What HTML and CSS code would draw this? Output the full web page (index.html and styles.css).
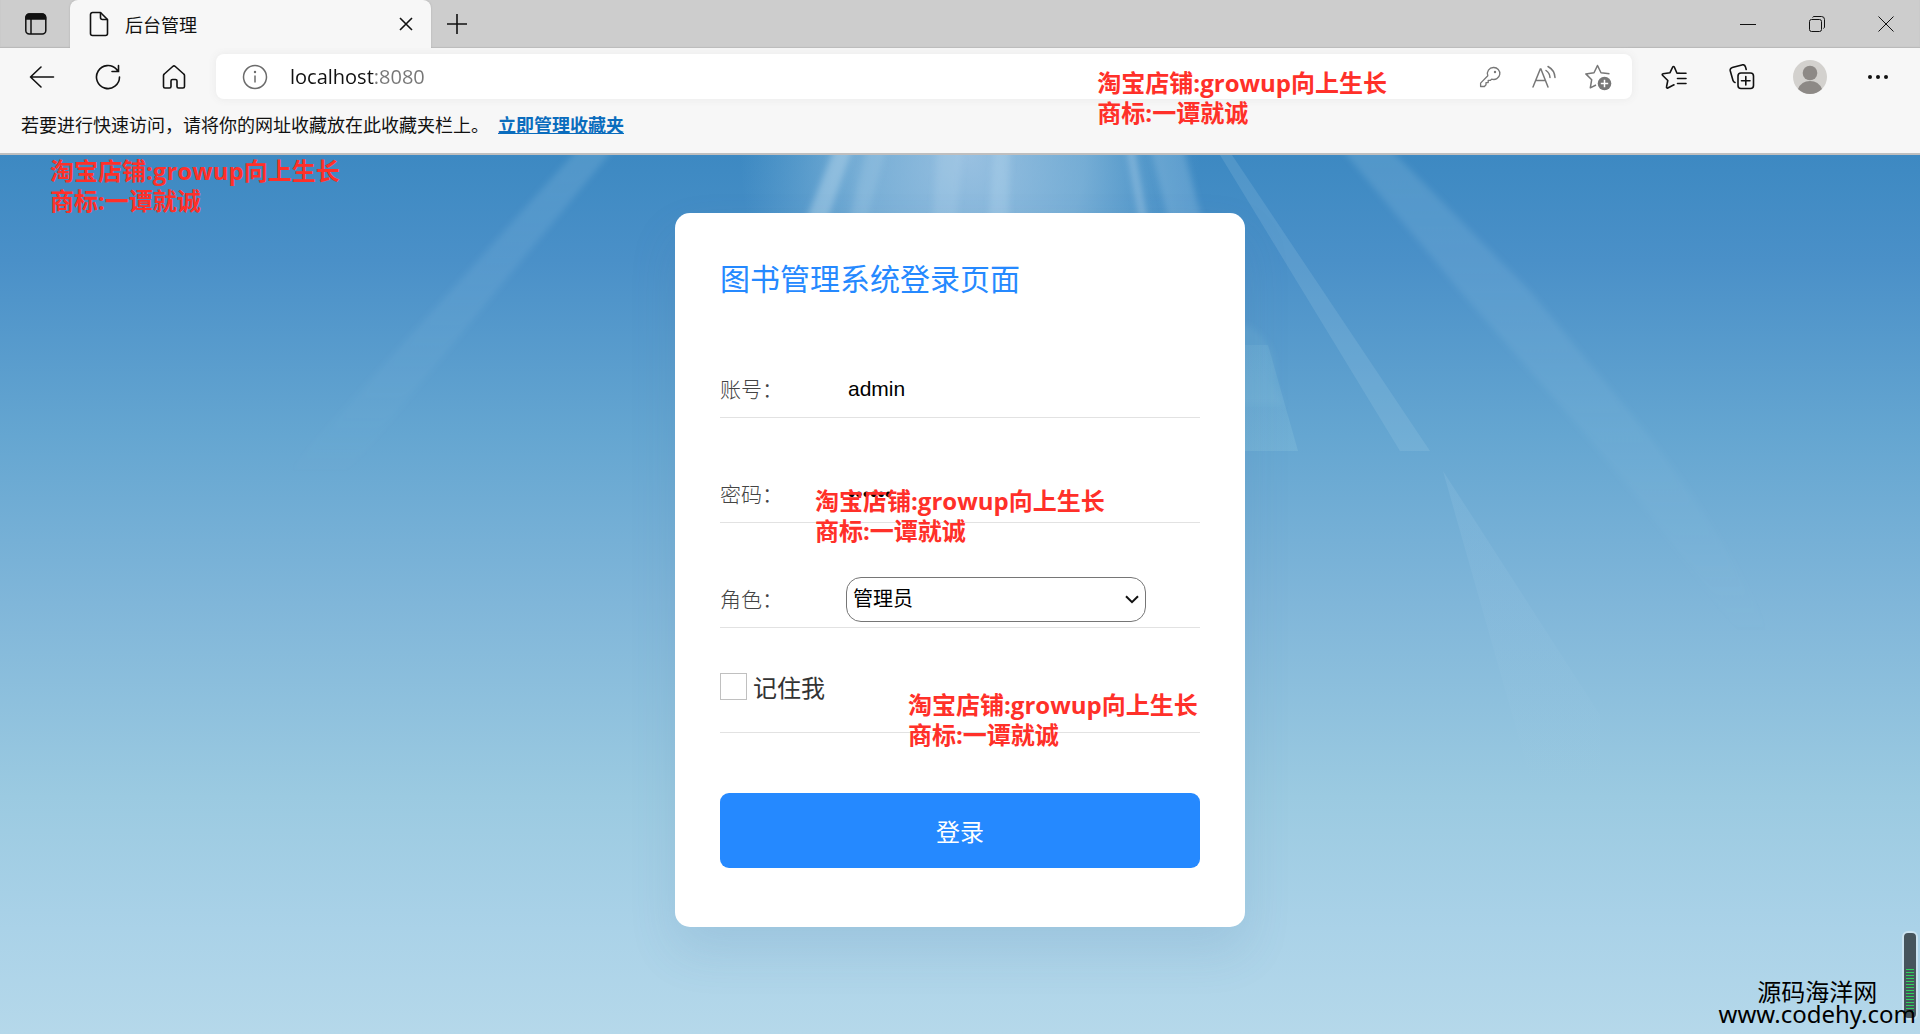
FILE: index.html
```html
<!DOCTYPE html>
<html lang="zh-CN">
  <head>
    <meta charset="UTF-8" />
    <meta name="viewport" content="width=device-width, initial-scale=1.0" />
    <title>后台管理</title>
    <link rel="stylesheet" href="styles.css">
  </head>
  <body>
    <!-- browser window -->
    <header class="browser">
      <div class="tab-strip">
        <button type="button" class="tab-menu" aria-label="标签页操作">
          <svg width="24" height="24" viewBox="0 0 24 24" fill="none" stroke="#111" stroke-width="1.5">
            <rect x="1.8" y="2" width="20" height="20" rx="3.5" />
            <path d="M2 7V5.500a3.500 3.500 0 0 1 3.500-3.500h12.500a3.500 3.500 0 0 1 3.500 3.500V7z" fill="#111" />
            <path d="M7 7v15" />
          </svg>
        </button>
        <div class="tab">
          <svg width="20" height="26" viewBox="0 0 20 26" fill="none" stroke="#111" stroke-width="1.6" stroke-linejoin="round">
            <path d="M3.500 1.500h8l7 7v14a2 2 0 0 1-2 2h-13a2 2 0 0 1-2-2v-19a2 2 0 0 1 2-2z" />
            <path d="M11.500 1.500v5a2 2 0 0 0 2 2h5" />
          </svg>
          <span>后台管理</span>
          <button type="button" class="tab-close" aria-label="关闭标签页">
            <svg width="14" height="14" viewBox="0 0 14 14" stroke="#111" stroke-width="1.6">
              <path d="M1 1l12 12M13 1L1 13" />
            </svg>
          </button>
        </div>
        <button type="button" class="new-tab" aria-label="新建标签页">
          <svg width="22" height="22" viewBox="0 0 22 22" stroke="#111" stroke-width="1.6">
            <path d="M11 1v20M1 11h20" />
          </svg>
        </button>
        <div class="window-controls">
          <button type="button" aria-label="最小化">
            <svg width="16" height="16" viewBox="0 0 16 16" stroke="#111"><path d="M0 8.500h16" /></svg>
          </button>
          <button type="button" aria-label="还原">
            <svg width="16" height="16" viewBox="0 0 16 16" fill="none" stroke="#111">
              <rect x="0.5" y="3.500" width="12" height="12" rx="2" />
              <path d="M3.500 1.500a2 2 0 0 1 1.500-1h7.500a3 3 0 0 1 3 3V11a2 2 0 0 1-1 1.500" />
            </svg>
          </button>
          <button type="button" aria-label="关闭">
            <svg width="16" height="16" viewBox="0 0 16 16" stroke="#111"><path d="M0.500 0.500l15 15M15.500 0.500l-15 15" /></svg>
          </button>
        </div>
      </div>

      <div class="toolbar">
        <div class="nav-buttons">
          <button type="button" aria-label="返回">
            <svg width="26" height="26" viewBox="0 0 26 26" fill="none" stroke="#111" stroke-width="1.6" stroke-linecap="round" stroke-linejoin="round">
              <path d="M12 3L1.500 13L12 23M1.500 13h23" />
            </svg>
          </button>
          <button type="button" aria-label="刷新">
            <svg width="26" height="26" viewBox="0 0 26 26" fill="none" stroke="#111" stroke-width="1.6" stroke-linecap="round">
              <path d="M24.500 13A11.500 11.500 0 1 1 21.500 5.300L23 7.300M23.500 1.500v6h-6.500" />
            </svg>
          </button>
          <button type="button" aria-label="主页">
            <svg width="26" height="26" viewBox="0 0 26 26" fill="none" stroke="#111" stroke-width="1.6" stroke-linejoin="round">
              <path d="M11.700 2.500L3.300 10a2 2 0 0 0-.8 1.600v10.900a1.500 1.500 0 0 0 1.500 1.500h4.500a1.500 1.500 0 0 0 1.500-1.500V17a1.500 1.500 0 0 1 1.500-1.500h3a1.500 1.500 0 0 1 1.500 1.500v5.500a1.500 1.500 0 0 0 1.500 1.500H22a1.500 1.500 0 0 0 1.500-1.500V11.600a2 2 0 0 0-.8-1.600L14.300 2.500a2 2 0 0 0-2.600 0z" />
            </svg>
          </button>
        </div>

        <div class="address-bar">
          <svg width="26" height="26" viewBox="0 0 26 26" fill="none" stroke="#6b6b6b" stroke-width="1.500">
            <circle cx="13" cy="13" r="11.500" />
            <path d="M13 11.500v7" />
            <circle cx="13" cy="8" r="1.200" fill="#6b6b6b" stroke="none" />
          </svg>
          <input type="text" class="url" aria-label="地址栏" value="localhost:8080" />
          <button type="button" aria-label="密码">
            <svg width="22" height="22" viewBox="0 0 22 22" fill="none" stroke="#777" stroke-width="1.300" stroke-linejoin="round">
              <path d="M14.500 1.500a6 6 0 1 1-1.800 11.600L11.500 14.300H9.200v2.300H7v2.200l-1.600 1.700H1.600v-3.400l7.200-7.400A6 6 0 0 1 14.500 1.500z" />
              <circle cx="16" cy="6" r="1.200" fill="#777" stroke="none" />
            </svg>
          </button>
          <button type="button" aria-label="大声朗读">
            <svg width="26" height="24" viewBox="0 0 26 24" fill="none" stroke="#777" stroke-width="1.500" stroke-linecap="round">
              <path d="M2 22L9.300 4h.6L17 22M4.800 15.500h9.600" />
              <path d="M15 5.500a9 9 0 0 1 4 7M17 1.500a13.500 13.500 0 0 1 7 11" />
            </svg>
          </button>
          <button type="button" aria-label="添加到收藏夹">
            <svg width="28" height="28" viewBox="0 0 28 28" fill="none" stroke="#777" stroke-width="1.500" stroke-linejoin="round">
              <path d="M25.500 10.800L17 9.800L13.500 2.500L10 9.800L1.800 10.900L7.700 16.700L6.300 24.800L12 22" />
              <circle cx="20.500" cy="20.500" r="6.800" fill="#777" stroke="none" />
              <path d="M20.500 16.800v7.400M16.800 20.500h7.400" stroke="#fff" />
            </svg>
          </button>
        </div>

        <div class="tool-buttons">
          <button type="button" aria-label="收藏夹">
            <svg width="26" height="26" viewBox="0 0 26 26" fill="none" stroke="#111" stroke-width="1.600" stroke-linecap="round" stroke-linejoin="round">
              <path d="M18 9.300H16L13.300 3a.9.9 0 0 0-1.600 0L9 8.700L2 9.800a.8.8 0 0 0-.5 1.400l5.300 5.300L5.500 23a.9.9 0 0 0 1.300 1L13 20.800" />
              <path d="M18 9.300h7M16.500 14.500H25M16.500 19.500H25" />
            </svg>
          </button>
          <button type="button" aria-label="集锦">
            <svg width="26" height="26" viewBox="0 0 26 26" fill="none" stroke="#111" stroke-width="1.600" stroke-linecap="round">
              <rect x="9" y="9" width="15.500" height="15.500" rx="3" />
              <path d="M16.800 12.500v8.500M12.500 16.800H21" />
              <path d="M6 18.500a3 3 0 0 1-2-2L1.300 7a3 3 0 0 1 2-3.600l9.600-2.500a3 3 0 0 1 3.600 2L17.200 5.500" />
            </svg>
          </button>
          <button type="button" aria-label="用户">
            <svg width="34" height="34" viewBox="0 0 34 34">
              <circle cx="17" cy="17" r="17" fill="#d3d1ce" />
              <circle cx="17" cy="13" r="7.300" fill="#8d8986" />
              <path d="M5 29a13 13 0 0 1 24 0a17 17 0 0 1-24 0z" fill="#8d8986" />
            </svg>
          </button>
          <button type="button" aria-label="设置及其他">
            <svg width="20" height="6" viewBox="0 0 20 6" fill="#111">
              <circle cx="2" cy="3" r="2" /><circle cx="10" cy="3" r="2" /><circle cx="18" cy="3" r="2" />
            </svg>
          </button>
        </div>
      </div>

      <div class="favorites">
        <span>若要进行快速访问，请将你的网址收藏放在此收藏夹栏上。</span>
        <a href="#">立即管理收藏夹</a>
      </div>

      <p class="stamp stamp-toolbar">淘宝店铺:growup向上生长<br />商标:一谭就诚</p>
    </header>

    <!-- login page -->
    <main class="page">
      <svg class="rays" viewBox="0 0 1920 879" preserveAspectRatio="xMidYMin slice" aria-hidden="true">
        <defs>
          <radialGradient id="glow">
            <stop offset="0" stop-color="#d5e5f5" stop-opacity="0.6" />
            <stop offset="0.5" stop-color="#b5d6ea" stop-opacity="0.46" />
            <stop offset="1" stop-color="#8fc4e0" stop-opacity="0" />
          </radialGradient>
          <linearGradient id="fade" x1="0" y1="0" x2="0" y2="1">
            <stop offset="0" stop-color="#b4d8ee" stop-opacity="0.18" />
            <stop offset="1" stop-color="#b4d8ee" stop-opacity="0" />
          </linearGradient>
          <linearGradient id="wedge" x1="0" y1="0" x2="0" y2="1">
            <stop offset="0" stop-color="#b4d8ee" stop-opacity="0.14" />
            <stop offset="1" stop-color="#b4d8ee" stop-opacity="0" />
          </linearGradient>
          <linearGradient id="patch" x1="0" y1="0" x2="0" y2="1">
            <stop offset="0" stop-color="#a0d4e4" stop-opacity="0.12" />
            <stop offset="1" stop-color="#a0d4e4" stop-opacity="0.2" />
          </linearGradient>
          <filter id="soft"><feGaussianBlur stdDeviation="3" /></filter>
        </defs>
        <ellipse cx="970" cy="0" rx="230" ry="260" fill="url(#glow)" />
        <g filter="url(#soft)">
          <path d="M580 -8H615L345 320H285z" fill="url(#fade)" />
          <path d="M835 -8H853L822 80H800z" fill="#cfe6f5" fill-opacity="0.36" />
          <path d="M867 -8H887L862 80H846z" fill="#cfe6f5" fill-opacity="0.16" />
          <path d="M937 -8H963L955 80H932z" fill="#cfe6f5" fill-opacity="0.16" />
          <path d="M994 -8H1010L1008 80H988z" fill="#cfe6f5" fill-opacity="0.22" />
          <path d="M1126 -8H1134L1150 80H1142z" fill="#cfe6f5" fill-opacity="0.3" />
          <path d="M1150 -8H1183L1206 80H1172z" fill="#cfe6f5" fill-opacity="0.2" />
          <path d="M1340 -8H1388L1530 136L1640 270Q1720 370 1770 480H1740Q1640 340 1560 250L1460 136z" fill="url(#fade)" />
          <path d="M1200 170H1248Q1280 190 1274 225L1284 250H1200z" fill="#a0d4e4" fill-opacity="0.1" />
        </g>
        <path d="M1220 0H1232L1430 296H1400z" fill="#b4d8ee" fill-opacity="0.16" />
        <path d="M1200 190H1268L1298 296H1200z" fill="url(#patch)" />
        <path d="M1443 316L1600 560V640H1535z" fill="url(#wedge)" />
      </svg>

      <form class="login-card">
        <h1>图书管理系统登录页面</h1>
        <div class="form-row">
          <label for="account">账号：</label>
          <input type="text" id="account" name="account" value="admin" />
        </div>
        <div class="form-row">
          <label for="password">密码：</label>
          <input type="password" id="password" name="password" value="123456" />
        </div>
        <div class="form-row">
          <label for="role">角色：</label>
          <div class="select">
            <select id="role" name="role">
              <option>管理员</option>
            </select>
            <svg width="14" height="9" viewBox="0 0 14 9" fill="none" stroke="#111" stroke-width="2">
              <path d="M1 1.200l6 6l6-6" />
            </svg>
          </div>
        </div>
        <div class="form-row remember">
          <input type="checkbox" id="remember" name="remember" />
          <label for="remember">记住我</label>
        </div>
        <button type="button" class="submit">登录</button>

        <p class="stamp stamp-password">淘宝店铺:growup向上生长<br />商标:一谭就诚</p>
        <p class="stamp stamp-remember">淘宝店铺:growup向上生长<br />商标:一谭就诚</p>
      </form>

      <p class="stamp stamp-page">淘宝店铺:growup向上生长<br />商标:一谭就诚</p>

      <div class="meter"></div>
      <p class="site-mark">源码海洋网<br />www.codehy.com</p>
    </main>
  </body>
</html>
```
FILE: styles.css
```css
* {
  box-sizing: border-box;
  margin: 0;
  padding: 0;
}

:root {
  --primary: #2589ff;
  --chrome: #f7f7f7;
  --strip: #cdcdcd;
  --line: #e2e2e2;
  --red: #ff3029;
}

body {
  display: flex;
  flex-direction: column;
  min-height: 100vh;
  font-family: 'Open Sans', 'Noto Sans CJK SC', sans-serif;
  color: #111;
}

button {
  display: flex;
  align-items: center;
  justify-content: center;
  border: none;
  background: none;
  font-family: inherit;
  cursor: pointer;
}

svg {
  flex-shrink: 0;
}

/* browser window */
.browser {
  position: relative;
  background-color: var(--chrome);
  border-bottom: 2px solid #bfbfbf;
  font-size: 18px;
}

.tab-strip {
  display: flex;
  height: 48px;
  background-color: var(--strip);
  box-shadow: inset 0 -1px 1px #b8b8b8;
}

.tab-menu {
  width: 70px;
  padding-left: 2px;
}

.tab {
  display: flex;
  align-items: center;
  gap: 16px;
  width: 361px;
  padding: 0 17px 0 19px;
  background-color: var(--chrome);
  border-radius: 8px 8px 0 0;
  box-shadow: 0 0 2px #aaa;
  clip-path: inset(0 -3px);
}

.tab-close {
  width: 16px;
  height: 24px;
  margin-left: auto;
}

.new-tab {
  width: 52px;
}

.window-controls {
  display: flex;
  margin-left: auto;
}

.window-controls button {
  width: 69px;
}

.toolbar {
  display: flex;
  align-items: center;
  height: 57px;
  padding: 0 8px 0 9px;
}

.nav-buttons,
.tool-buttons {
  display: flex;
  align-items: center;
}

.nav-buttons button {
  width: 66px;
  height: 45px;
}

.tool-buttons button {
  width: 68px;
  height: 45px;
}

.address-bar {
  display: flex;
  flex: 1;
  align-items: center;
  height: 45px;
  margin: 0 8px 0 9px;
  padding: 0 7px 0 26px;
  background-color: white;
  border-radius: 8px;
  box-shadow: 0 0 8px #e8e8e8;
}

.address-bar button {
  width: 54px;
  height: 45px;
}

/* host is dark, port is grey */
.url {
  flex: 1;
  min-width: 0;
  padding-left: 22px;
  border: none;
  outline: none;
  font-family: 'Open Sans', sans-serif;
  font-size: 20px;
  color: transparent;
  background: linear-gradient(to right, #111 107px, #767676 107px);
  -webkit-background-clip: text;
  background-clip: text;
}

.favorites {
  display: flex;
  gap: 9px;
  height: 48px;
  padding: 7px 21px;
  line-height: 26px;
}

.favorites a {
  font-weight: 700;
  color: #0a6cbd;
}

/* login page */
.page {
  position: relative;
  flex: 1;
  overflow: hidden;
  padding: 58px 20px 107px;
  background: linear-gradient(
    #3d89c2 0%,
    #4a90c8 12%,
    #65a6d1 32%,
    #80b6d9 51%,
    #9bcae1 73%,
    #aad2e8 88%,
    #b5d8ea 100%
  );
}

.rays {
  position: absolute;
  inset: 0;
  width: 100%;
  height: 100%;
}

.login-card {
  position: relative;
  max-width: 570px;
  margin: 0 auto;
  padding: 45px 45px 59px;
  background-color: white;
  border-radius: 15px;
  box-shadow: 0 24px 48px rgba(80, 120, 160, 0.14);
}

.login-card h1 {
  margin-bottom: 61px;
  font-size: 30px;
  font-weight: 400;
  line-height: 42px;
  color: var(--primary);
}

.form-row {
  display: flex;
  align-items: center;
  height: 57px;
  margin-top: 48px;
  border-bottom: 1px solid var(--line);
}

.form-row label {
  width: 126px;
  font-size: 21px;
  font-weight: 300;
  line-height: 30px;
  color: #444;
}

.form-row input[type='text'],
.form-row input[type='password'] {
  flex: 1;
  min-width: 0;
  height: 45px;
  padding-left: 2px;
  border: none;
  outline: none;
  font-family: 'Liberation Sans', sans-serif;
  font-size: 21px;
  color: black;
}

.select {
  position: relative;
  width: 300px;
}

.select select {
  width: 100%;
  height: 45px;
  padding: 0 6px;
  appearance: none;
  border: 1px solid #767676;
  border-radius: 15px;
  background-color: white;
  font-family: 'Liberation Sans', 'Noto Sans CJK SC', sans-serif;
  font-size: 20px;
  color: black;
}

.select svg {
  position: absolute;
  top: 18px;
  right: 7px;
  pointer-events: none;
}

.form-row.remember {
  align-items: flex-start;
  gap: 6px;
  height: 60px;
  margin-top: 45px;
}

.remember input {
  width: 27px;
  height: 27px;
  appearance: none;
  border: 1px solid #c0c0c0;
}

.remember input:checked {
  background-color: var(--primary);
}

.remember label {
  width: auto;
  font-size: 24px;
  font-weight: 400;
  color: #333;
}

.submit {
  width: 100%;
  height: 75px;
  margin-top: 60px;
  border-radius: 9px;
  background-color: var(--primary);
  font-size: 24px;
  color: white;
}

/* marks lying over the window */
.stamp {
  position: absolute;
  font-size: 24px;
  font-weight: 700;
  line-height: 30px;
  white-space: nowrap;
  color: var(--red);
  pointer-events: none;
}

.stamp-toolbar {
  top: 68px;
  right: 533px;
}

.stamp-page {
  top: 1px;
  left: 50px;
}

.stamp-password {
  top: 273px;
  left: 140px;
}

.stamp-remember {
  top: 477px;
  left: 233px;
}

.site-mark {
  position: absolute;
  right: 4px;
  bottom: 9px;
  font-family: 'Noto Sans', 'Noto Sans CJK SC', sans-serif;
  font-size: 24px;
  line-height: 22px;
  text-align: center;
  color: black;
}

.meter {
  position: absolute;
  right: 2px;
  bottom: 14px;
  width: 16px;
  height: 89px;
  padding: 36px 2px 4px;
  border: 2px solid #cbe3f0;
  border-radius: 6px;
  background:
    repeating-linear-gradient(#2fd05c 0 1px, transparent 1px 3px) content-box,
    #46545c;
}
```
